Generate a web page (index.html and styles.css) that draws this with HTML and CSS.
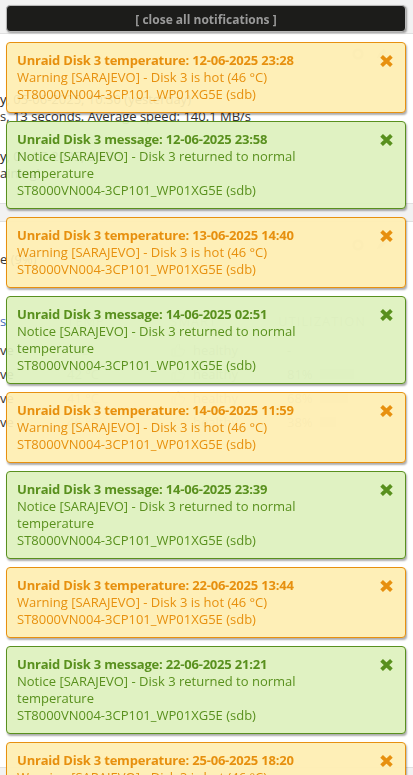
FILE: index.html
```html
<!DOCTYPE html>
<html lang="en">
<head>
  <meta charset="UTF-8">
  <meta name="viewport" content="width=device-width, initial-scale=1.0">
  <title>Dashboard</title>
  <link rel="stylesheet" href="styles.css">
</head>
<body>
  <!-- dashboard behind the notifications -->
  <div class="page">
    <section class="panel panel-array">
      <div class="panel-head">
        <span class="tool"><svg viewBox="0 0 16 16"><circle cx="8" cy="8" r="5" fill="none" stroke="#ddd" stroke-width="3"/></svg></span>
        <span class="tool"><svg viewBox="0 0 16 16"><path d="M3 13l2-5 6-6 3 3-6 6z" fill="#ddd"/></svg></span>
      </div>
      <div class="lines">
        <p class="strong"><span class="pre">Last check completed on Thursda</span>y, 05-06-2025, 10:30 (yesterday)</p>
        <p><span class="pre">Duration: 16 hours, 13 minute</span>s, 13 seconds. Average speed: 140.1 MB/s</p>
      </div>
      <div class="lines">
        <p class="strong"><span class="pre">Next check scheduled on Sunda</span>y, 01-07-2025, 00:30</p>
        <p><span class="pre">Due in: 24 days, 23 hours, 49 minutes (rem</span>aining)</p>
      </div>
    </section>

    <section class="panel panel-disks">
      <div class="panel-head">
        <p class="usage"><span class="pre">Storage in us</span>e (9%)</p>
        <div class="tools">
          <span class="tool small"><svg viewBox="0 0 16 16"><circle cx="8" cy="8" r="5" fill="none" stroke="#ddd" stroke-width="3"/></svg></span>
          <span class="tool small"><svg viewBox="0 0 16 16"><path d="M3 13l2-5 6-6 3 3-6 6z" fill="#ddd"/></svg></span>
        </div>
      </div>
      <div class="disk-table">
        <div class="row head">
          <span class="name link"><span class="pre">Disk</span>s</span><span>TEMP</span><span>SMART</span><span>UTILIZATION</span>
        </div>
        <div class="row">
          <span class="name"><span class="pre">Parity dri</span>ve</span><span>- °C</span>
          <span class="smart"><svg class="thumb" viewBox="0 0 16 16"><path d="M2 7h3v7H2zM5 7l3-5c1.5 0 2 1 1.6 2.4L9 7h4.2c1 0 1.6.9 1.3 1.8l-1.6 4.4c-.3.6-.8.8-1.4.8H5" fill="none" stroke="#ddd" stroke-width="1.2"/></svg>healthy</span>
          <span class="util">-</span>
        </div>
        <div class="row">
          <span class="name"><span class="pre">Data dri</span>ve</span><span>42 °C</span>
          <span class="smart"><svg class="thumb" viewBox="0 0 16 16"><path d="M2 7h3v7H2zM5 7l3-5c1.5 0 2 1 1.6 2.4L9 7h4.2c1 0 1.6.9 1.3 1.8l-1.6 4.4c-.3.6-.8.8-1.4.8H5" fill="none" stroke="#ddd" stroke-width="1.2"/></svg>healthy</span>
          <span class="util">81% <i class="track"><i class="fill" style="width:81%"></i></i></span>
        </div>
        <div class="row">
          <span class="name"><span class="pre">Data dri</span>ve</span><span>41 °C</span>
          <span class="smart"><svg class="thumb" viewBox="0 0 16 16"><path d="M2 7h3v7H2zM5 7l3-5c1.5 0 2 1 1.6 2.4L9 7h4.2c1 0 1.6.9 1.3 1.8l-1.6 4.4c-.3.6-.8.8-1.4.8H5" fill="none" stroke="#ddd" stroke-width="1.2"/></svg>healthy</span>
          <span class="util">68% <i class="track"><i class="fill" style="width:68%"></i></i></span>
        </div>
        <div class="row">
          <span class="name"><span class="pre">Data dri</span>ve</span><span>46 °C</span>
          <span class="smart"><svg class="thumb" viewBox="0 0 16 16"><path d="M2 7h3v7H2zM5 7l3-5c1.5 0 2 1 1.6 2.4L9 7h4.2c1 0 1.6.9 1.3 1.8l-1.6 4.4c-.3.6-.8.8-1.4.8H5" fill="none" stroke="#ddd" stroke-width="1.2"/></svg>healthy</span>
          <span class="util">38% <i class="track"><i class="fill" style="width:38%"></i></i></span>
        </div>
      </div>
    </section>
  </div>

  <!-- notification stack -->
  <div class="growl">
    <div class="closer">[ close all notifications ]</div>

    <div class="note warning">
      <div class="note-body">
        <div class="note-title">Unraid Disk 3 temperature: 12-06-2025 23:28</div>
        <div>Warning [SARAJEVO] - Disk 3 is hot (46 °C)</div>
        <div>ST8000VN004-3CP101_WP01XG5E (sdb)</div>
      </div>
      <svg class="x" viewBox="0 0 13 12"><path d="M1.6 1.4L11.4 10.6M11.4 1.4L1.6 10.6"/></svg>
    </div>

    <div class="note normal">
      <div class="note-body">
        <div class="note-title">Unraid Disk 3 message: 12-06-2025 23:58</div>
        <div>Notice [SARAJEVO] - Disk 3 returned to normal temperature</div>
        <div>ST8000VN004-3CP101_WP01XG5E (sdb)</div>
      </div>
      <svg class="x" viewBox="0 0 13 12"><path d="M1.6 1.4L11.4 10.6M11.4 1.4L1.6 10.6"/></svg>
    </div>

    <div class="note warning">
      <div class="note-body">
        <div class="note-title">Unraid Disk 3 temperature: 13-06-2025 14:40</div>
        <div>Warning [SARAJEVO] - Disk 3 is hot (46 °C)</div>
        <div>ST8000VN004-3CP101_WP01XG5E (sdb)</div>
      </div>
      <svg class="x" viewBox="0 0 13 12"><path d="M1.6 1.4L11.4 10.6M11.4 1.4L1.6 10.6"/></svg>
    </div>

    <div class="note normal">
      <div class="note-body">
        <div class="note-title">Unraid Disk 3 message: 14-06-2025 02:51</div>
        <div>Notice [SARAJEVO] - Disk 3 returned to normal temperature</div>
        <div>ST8000VN004-3CP101_WP01XG5E (sdb)</div>
      </div>
      <svg class="x" viewBox="0 0 13 12"><path d="M1.6 1.4L11.4 10.6M11.4 1.4L1.6 10.6"/></svg>
    </div>

    <div class="note warning">
      <div class="note-body">
        <div class="note-title">Unraid Disk 3 temperature: 14-06-2025 11:59</div>
        <div>Warning [SARAJEVO] - Disk 3 is hot (46 °C)</div>
        <div>ST8000VN004-3CP101_WP01XG5E (sdb)</div>
      </div>
      <svg class="x" viewBox="0 0 13 12"><path d="M1.6 1.4L11.4 10.6M11.4 1.4L1.6 10.6"/></svg>
    </div>

    <div class="note normal">
      <div class="note-body">
        <div class="note-title">Unraid Disk 3 message: 14-06-2025 23:39</div>
        <div>Notice [SARAJEVO] - Disk 3 returned to normal temperature</div>
        <div>ST8000VN004-3CP101_WP01XG5E (sdb)</div>
      </div>
      <svg class="x" viewBox="0 0 13 12"><path d="M1.6 1.4L11.4 10.6M11.4 1.4L1.6 10.6"/></svg>
    </div>

    <div class="note warning">
      <div class="note-body">
        <div class="note-title">Unraid Disk 3 temperature: 22-06-2025 13:44</div>
        <div>Warning [SARAJEVO] - Disk 3 is hot (46 °C)</div>
        <div>ST8000VN004-3CP101_WP01XG5E (sdb)</div>
      </div>
      <svg class="x" viewBox="0 0 13 12"><path d="M1.6 1.4L11.4 10.6M11.4 1.4L1.6 10.6"/></svg>
    </div>

    <div class="note normal">
      <div class="note-body">
        <div class="note-title">Unraid Disk 3 message: 22-06-2025 21:21</div>
        <div>Notice [SARAJEVO] - Disk 3 returned to normal temperature</div>
        <div>ST8000VN004-3CP101_WP01XG5E (sdb)</div>
      </div>
      <svg class="x" viewBox="0 0 13 12"><path d="M1.6 1.4L11.4 10.6M11.4 1.4L1.6 10.6"/></svg>
    </div>

    <div class="note warning">
      <div class="note-body">
        <div class="note-title">Unraid Disk 3 temperature: 25-06-2025 18:20</div>
        <div>Warning [SARAJEVO] - Disk 3 is hot (46 °C)</div>
        <div>ST8000VN004-3CP101_WP01XG5E (sdb)</div>
      </div>
      <svg class="x" viewBox="0 0 13 12"><path d="M1.6 1.4L11.4 10.6M11.4 1.4L1.6 10.6"/></svg>
    </div>
  </div>
</body>
</html>
```

FILE: styles.css
```css
html, body { height: 100%; }
body {
  margin: 0;
  background: #f2f2f2;
  font-family: "Open Sans", "Noto Sans", sans-serif;
  font-size: 13px;
  color: #333;
  overflow: hidden;
}
p { margin: 0; }

/* text whose start is scrolled off the left edge */
.pre {
  display: inline-flex;
  justify-content: flex-end;
  width: 0;
  white-space: nowrap;
}

/* background dashboard */
.page { padding-top: 33px; }
.panel {
  background: #fff;
  border-top: 1px solid #e0e0e0;
  border-bottom: 1px solid #e0e0e0;
  overflow: hidden;
}
.panel-array { height: 169px; }
.panel-array .panel-head {
  height: 57px;
  box-sizing: border-box;
  padding: 9px 21px 0 0;
  display: flex;
  justify-content: flex-end;
  gap: 1px;
}
.tool {
  width: 22px; height: 22px;
  background: #f4f4f4;
  border-radius: 4px;
  display: flex; align-items: center; justify-content: center;
}
.tool svg { width: 14px; height: 14px; }
.tool.small { height: 18px; }
.lines { line-height: 17px; white-space: nowrap; }
.lines + .lines { margin-top: 23px; }
.lines .strong { color: #222; }

.panel-disks { margin-top: 17px; height: 545px; }
.panel-disks .panel-head {
  height: 46px;
  box-sizing: border-box;
  padding: 14px 21px 0 0;
  display: flex;
  justify-content: space-between;
}
.usage { align-self: flex-end; line-height: 17px; white-space: nowrap; }
.tools { display: flex; gap: 1px; }

.disk-table { margin-top: 44px; }
.row {
  display: grid;
  grid-template-columns: 67px 103px 108px 135px;
  height: 24px;
  align-items: center;
  white-space: nowrap;
  color: #b0b0b0;
}
.row .name { color: #333; }
.row.head { height: 17px; margin-bottom: 9px; letter-spacing: 1px; color: #c8c8c8; }
.row.head .name.link { color: #486dba; letter-spacing: 0; }
.smart { display: flex; align-items: center; gap: 7px; }
.thumb { width: 16px; height: 16px; }
.util { padding-left: 9px; display: flex; align-items: center; gap: 7px; }
.track { display: inline-block; width: 42px; height: 10px; background: #f2f2f2; }
.fill { display: block; height: 100%; background: #e2e2e2; }

/* notifications */
.growl {
  position: fixed;
  top: 5px;
  left: 6px;
  width: 400px;
}
.closer {
  height: 27px;
  box-sizing: border-box;
  border: 1px solid #b8b8b8;
  border-radius: 4px;
  background: #1c1c1a;
  color: #9a9a9a;
  font-size: 12px;
  font-weight: bold;
  line-height: 27px;
  text-align: center;
  box-shadow: 1px 1px 2px #999;
  margin-bottom: 10px;
}
.note {
  display: flex;
  align-items: flex-start;
  padding: 9px 12px 9px 10px;
  border: 1px solid;
  border-radius: 4px;
  line-height: 17px;
  margin-bottom: 8px;
  opacity: .94;
  box-shadow: 1px 2px 2px rgba(0, 0, 0, .35);
}
.note-body { flex: 1; padding-right: 30px; }
.note-title { font-weight: bold; letter-spacing: -0.2px; }
.x {
  width: 13px; height: 12px;
  margin-top: 3px;
  fill: none;
  stroke: currentColor;
  stroke-width: 3.9;
}
.warning { background: #feefb3; border-color: #e68a00; color: #e68a00; }
.normal { background: #dff2bf; border-color: #4f8a10; color: #4f8a10; }
```
